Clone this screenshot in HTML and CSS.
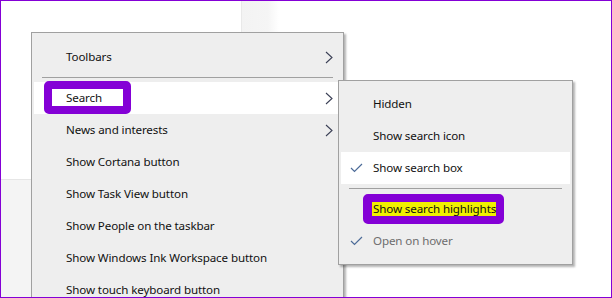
FILE: index.html
```html
<!DOCTYPE html>
<html>

<head>
	<title>Taskbar menu</title>
	<meta charset="utf-8">
	<link rel="stylesheet" href="styles.css">
</head>

<body>
	<div class="screen">
		<div class="desk-strip"></div>
		<div class="desk-lower"></div>

		<div class="menu main-menu">
			<div class="item">
				<span class="label">Toolbars</span>
				<svg class="arrow" width="8" height="13" viewBox="0 0 8 13"><path d="M1 1 L7 6.5 L1 12" /></svg>
			</div>
			<div class="sep"></div>
			<div class="item hover">
				<span class="label"><span class="boxed">Search</span></span>
				<svg class="arrow" width="8" height="13" viewBox="0 0 8 13"><path d="M1 1 L7 6.5 L1 12" /></svg>
			</div>
			<div class="item">
				<span class="label">News and interests</span>
				<svg class="arrow" width="8" height="13" viewBox="0 0 8 13"><path d="M1 1 L7 6.5 L1 12" /></svg>
			</div>
			<div class="item"><span class="label">Show Cortana button</span></div>
			<div class="item"><span class="label">Show Task View button</span></div>
			<div class="item"><span class="label">Show People on the taskbar</span></div>
			<div class="item"><span class="label">Show Windows Ink Workspace button</span></div>
			<div class="item"><span class="label">Show touch keyboard button</span></div>
		</div>

		<div class="menu sub-menu">
			<div class="item"><span class="label">Hidden</span></div>
			<div class="item"><span class="label">Show search icon</span></div>
			<div class="item hover">
				<svg class="check" width="13" height="10" viewBox="0 0 13 10"><path d="M1 5 L4.5 8.5 L12 1" /></svg>
				<span class="label">Show search box</span>
			</div>
			<div class="sep"></div>
			<div class="item"><span class="label"><span class="marker">Show search highlights</span></span></div>
			<div class="item disabled">
				<svg class="check" width="13" height="10" viewBox="0 0 13 10"><path d="M1 5 L4.5 8.5 L12 1" /></svg>
				<span class="label">Open on hover</span>
			</div>
		</div>
	</div>
</body>

</html>
```

FILE: styles.css
```css
* {
	margin: 0;
	box-sizing: border-box;
}

body {
	background-color: #fff;
	font-family: "Noto Sans", "Open Sans", sans-serif;
	font-size: 11.6px;
	letter-spacing: -0.12px;
	color: #111;
}

.screen {
	width: 612px;
	height: 298px;
	border: 1px solid #8400d6;
	background-color: #fff;
	position: relative;
	overflow: hidden;
}

.desk-strip {
	position: absolute;
	left: 240px;
	top: 0;
	width: 38px;
	height: 32px;
	border-left: 1px solid #e9e9e9;
	background: linear-gradient(to right, #f3f3f3 0, #f5f5f5 70%, #fff 100%);
}

.desk-lower {
	position: absolute;
	left: 0;
	top: 178px;
	width: 31px;
	height: 130px;
	border-top: 1px solid #e6e6e6;
	background-color: #f4f4f4;
}

.menu {
	position: absolute;
	background-color: #eeeeee;
	border: 1px solid #a0a0a0;
	box-shadow: 2px 2px 2px rgba(0, 0, 0, 0.3);
	padding: 8px 2px;
}

.main-menu {
	left: 30px;
	top: 31px;
	width: 313px;
	height: 300px;
}

.sub-menu {
	left: 337px;
	top: 79px;
	width: 235px;
	padding: 7px 2px;
}

.item {
	display: grid;
	grid-template-columns: 32px 1fr auto;
	align-items: center;
	height: 32px;
	padding-right: 8px;
}

.item .label {
	grid-column: 2;
	white-space: nowrap;
	margin-bottom: 2px;
}

.item.hover {
	background-color: #fff;
}

.item.disabled {
	color: #6d6d6d;
}

.arrow {
	grid-column: 3;
	fill: none;
	stroke: #3a3f55;
	stroke-width: 1.1;
}

.check {
	grid-column: 1;
	margin-left: 9px;
	fill: none;
	stroke: #4c6b98;
	stroke-width: 1.2;
}

.sep {
	height: 1px;
	margin: 4px 8px;
	background-color: #a0a0a0;
}

.boxed {
	display: inline-block;
	line-height: 17px;
	background-color: #fff;
	border: 8px solid #8400d6;
	border-radius: 5px;
	padding: 0 21px 0 14px;
	margin: -8px 0 -8px -22px;
}

.marker {
	display: inline-block;
	line-height: 14px;
	background-color: #f0f000;
	border: 8px solid #8400d6;
	border-left-width: 9px;
	border-radius: 5px;
	padding-left: 1px;
	margin: -8px 0 -8px -10px;
}
```
